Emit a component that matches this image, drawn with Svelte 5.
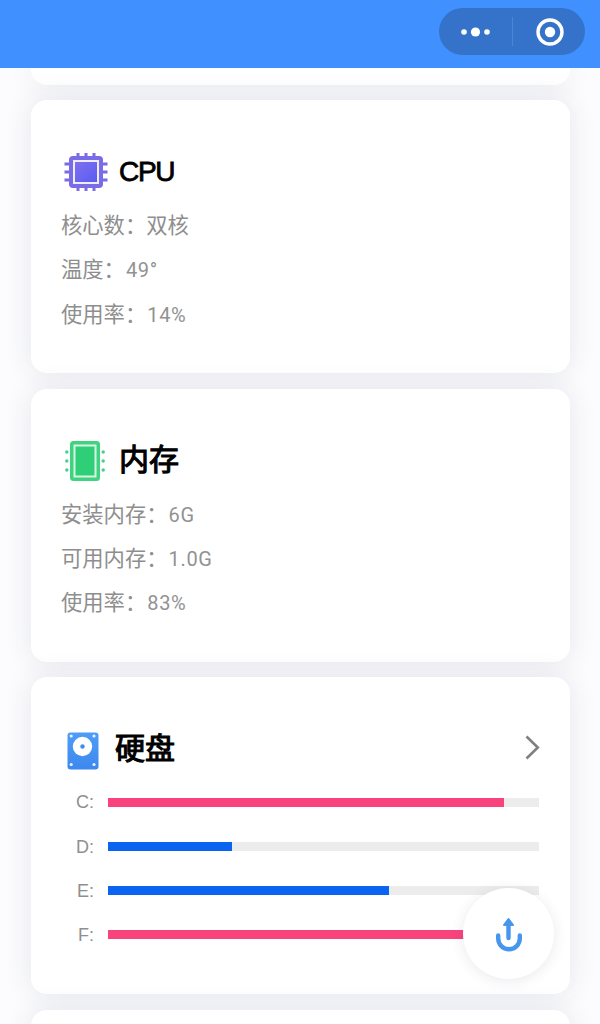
<script>
  const cpu = [
    { k: '核心数', v: '双核', cjk: true },
    { k: '温度', v: '49°' },
    { k: '使用率', v: '14%' }
  ];
  const mem = [
    { k: '安装内存', v: '6G' },
    { k: '可用内存', v: '1.0G' },
    { k: '使用率', v: '83%' }
  ];
  const bars = [
    { label: 'C:', pct: 91.9, color: 'pink' },
    { label: 'D:', pct: 28.8, color: 'blue' },
    { label: 'E:', pct: 65.2, color: 'blue' },
    { label: 'F:', pct: 85, color: 'pink' }
  ];
</script>

{#snippet line(item)}
  <p class="line">{item.k}：<span class:latin={!item.cjk}>{item.v}</span></p>
{/snippet}

<div class="page">
  <header class="nav">
    <div class="capsule">
      <svg class="dots" width="30" height="10" viewBox="0 0 30 10" aria-hidden="true">
        <circle cx="3" cy="5" r="2.8" fill="#fff" />
        <circle cx="14.5" cy="5" r="4.6" fill="#fff" />
        <circle cx="26" cy="5" r="2.8" fill="#fff" />
      </svg>
      <span class="sep"></span>
      <svg class="target" width="30" height="30" viewBox="0 0 30 30" aria-hidden="true">
        <circle cx="15" cy="15" r="12" fill="none" stroke="#fff" stroke-width="3.4" />
        <circle cx="15" cy="15" r="5.2" fill="#fff" />
      </svg>
    </div>
  </header>

  <main class="list">
    <div class="card stub"></div>

    <section class="card">
      <h2 class="title">
        <svg class="icon cpu" width="44" height="42" viewBox="0 0 44 42" aria-hidden="true">
          <defs>
            <linearGradient id="cpuG" x1="0" y1="0" x2="1" y2="1">
              <stop offset="0" stop-color="#7f70ee" />
              <stop offset="1" stop-color="#5a5cf2" />
            </linearGradient>
          </defs>
          <g stroke="#7a6be6" stroke-width="3">
            <path d="M14 2v5M22 2v5M30 2v5M14 35v5M22 35v5M30 35v5" />
            <path d="M0.5 13h6M0.5 21h6M0.5 29h6M37.5 13h6M37.5 21h6M37.5 29h6" />
          </g>
          <rect x="5" y="5" width="34" height="32" rx="4" fill="#7a6be6" />
          <rect x="9" y="9" width="26" height="24" fill="#efecfc" />
          <rect x="11" y="11" width="22" height="20" fill="url(#cpuG)" />
        </svg>
        <span class="t-cpu">CPU</span>
      </h2>
      {#each cpu as item}{@render line(item)}{/each}
    </section>

    <section class="card">
      <h2 class="title up1">
        <svg class="icon mem" width="40" height="42" viewBox="0 0 40 42" aria-hidden="true">
          <rect x="5" y="1" width="30" height="40" rx="3.5" fill="#3ed281" />
          <rect x="8.5" y="4.5" width="23" height="33" fill="#d9f6e5" />
          <rect x="10.5" y="6.5" width="19" height="29" fill="#2fcf78" />
          <g fill="#46cf86">
            <circle cx="1.8" cy="12" r="1.7" /><circle cx="1.8" cy="21" r="1.7" /><circle cx="1.8" cy="30" r="1.7" />
            <circle cx="38.2" cy="12" r="1.7" /><circle cx="38.2" cy="21" r="1.7" /><circle cx="38.2" cy="30" r="1.7" />
          </g>
        </svg>
        <span class="t-cjk">内存</span>
      </h2>
      {#each mem as item}{@render line(item)}{/each}
    </section>

    <section class="card">
      <h2 class="title disk-title">
        <svg class="icon disk" width="32" height="38" viewBox="0 0 32 38" aria-hidden="true">
          <defs>
            <linearGradient id="diskG" x1="0" y1="0" x2="0" y2="1">
              <stop offset="0" stop-color="#4e9df6" />
              <stop offset="1" stop-color="#3e88ee" />
            </linearGradient>
          </defs>
          <rect x="0.5" y="0.5" width="31" height="37" rx="3" fill="url(#diskG)" />
          <circle cx="15.5" cy="14.5" r="9.7" fill="#fff" />
          <circle cx="15.5" cy="14.5" r="2.2" fill="#3f8cf0" />
          <g fill="#e6f1fe">
            <circle cx="4.2" cy="4" r="1.6" /><circle cx="27" cy="4" r="1.6" />
            <circle cx="4.2" cy="32.5" r="1.6" /><circle cx="27" cy="32.5" r="1.6" />
          </g>
        </svg>
        <span class="t-cjk">硬盘</span>
        <svg class="chev" width="15" height="25" viewBox="0 0 15 25" aria-hidden="true">
          <path d="M1.5 1.5 12.8 12.5 1.5 23.5" fill="none" stroke="#808080" stroke-width="2.6" />
        </svg>
      </h2>
      {#each bars as b}
        <div class="row">
          <span class="lab">{b.label}</span>
          <span class="track"><span class="fill {b.color}" style="width:{b.pct}%"></span></span>
        </div>
      {/each}
    </section>

    <div class="card tail"></div>
  </main>

  <button class="fab" aria-label="上传">
    <svg width="34" height="36" viewBox="0 0 34 36" aria-hidden="true">
      <path d="M6.2 19.5v3a10.8 10.8 0 0 0 21.6 0v-3" fill="none" stroke="#4796ee" stroke-width="4.4" stroke-linecap="round" />
      <path d="M16.5 9v13" fill="none" stroke="#4796ee" stroke-width="4.4" stroke-linecap="round" />
      <path d="M16.5 3 21 9H12Z" fill="#4796ee" stroke="#4796ee" stroke-width="2" stroke-linejoin="round" />
    </svg>
  </button>
</div>

<style>
  :global(body) {
    margin: 0;
    background: #fcfcfe;
  }
  .page {
    position: relative;
    width: 600px;
    height: 1024px;
    overflow: hidden;
    background: #fcfcfe;
    font-family: Roboto, "Noto Sans CJK SC", sans-serif;
  }
  .nav {
    position: relative;
    z-index: 2;
    height: 68px;
    background: #4190ff;
    display: flex;
    justify-content: flex-end;
    padding: 8px 15px 0 0;
    box-sizing: border-box;
  }
  .capsule {
    width: 146px;
    height: 47px;
    box-sizing: border-box;
    border-radius: 24px;
    background: #3573cb;
    display: flex;
    align-items: center;
  }
  .dots {
    margin-left: 22px;
  }
  .sep {
    width: 1px;
    height: 29px;
    background: #4c85d4;
    margin-left: 21px;
  }
  .target {
    margin-left: 22px;
  }
  .list {
    display: flex;
    flex-direction: column;
    gap: 15.67px;
    margin: 0 30px 0 30.5px;
  }
  .card {
    flex: none;
    background: #fff;
    border-radius: 16px;
    box-shadow: 0 0 28px rgba(45, 55, 100, 0.11);
    padding: 47px 31px 37px 30.5px;
    box-sizing: border-box;
    height: 273px;
  }
  .stub {
    height: 17px;
    padding: 0;
    border-radius: 0 0 16px 16px;
    margin-bottom: -0.67px;
  }
  .card:nth-child(4) {
    height: 317px;
  }
  .tail {
    height: 60px;
    padding: 0;
  }
  .title {
    margin: 0 0 7px;
    height: 50px;
    display: flex;
    align-items: center;
    color: #000;
    font-family: "Liberation Sans", "Noto Sans CJK SC", sans-serif;
    font-weight: 400;
    font-size: 30px;
    line-height: 1;
  }
  .disk-title {
    margin-bottom: 6px;
  }
  .icon {
    flex: none;
  }
  .cpu {
    margin: 0 11px 0 3px;
  }
  .mem {
    margin: 0 14px 0 4px;
  }
  .disk {
    margin: 3px 16px 0 6px;
  }
  .t-cpu {
    font-size: 28px;
    letter-spacing: -1.3px;
    -webkit-text-stroke: 0.8px #000;
  }
  .t-cjk {
    -webkit-text-stroke: 1.1px #000;
  }
  .up1 .t-cjk {
    position: relative;
    top: -1px;
  }
  .chev {
    margin: -4px -1px 0 auto;
  }
  .line {
    margin: 0;
    height: 44.33px;
    line-height: 44.33px;
    font-size: 21.3px;
    color: #8e8e8e;
    white-space: nowrap;
  }
  .latin {
    font-size: 20px;
    letter-spacing: 0.7px;
    margin-left: 1px;
    color: #929292;
  }
  .row {
    height: 44.17px;
    display: flex;
    align-items: center;
    justify-content: flex-end;
    gap: 14px;
  }
  .lab {
    font-family: "Liberation Sans", sans-serif;
    font-size: 18px;
    color: #8f8f8f;
    line-height: 1;
  }
  .track {
    display: block;
    width: 431px;
    height: 9px;
    background: #ececec;
  }
  .fill {
    display: block;
    height: 100%;
  }
  .pink {
    background: #f9437d;
  }
  .blue {
    background: #0a64f0;
  }
  .fab {
    position: absolute;
    left: 463px;
    top: 888px;
    width: 91px;
    height: 91px;
    padding: 0;
    border: 0;
    border-radius: 50%;
    background: #fff;
    box-shadow: 0 2px 14px rgba(40, 50, 90, 0.1);
    display: flex;
    align-items: center;
    justify-content: center;
  }
</style>
